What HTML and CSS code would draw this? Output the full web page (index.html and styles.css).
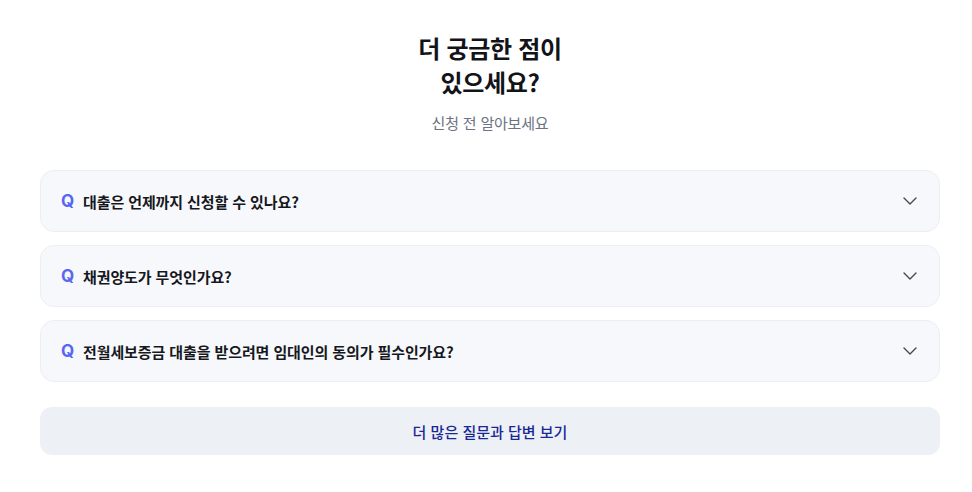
FILE: index.html
```html
<!DOCTYPE html>
<html lang="ko">
<head>
<meta charset="utf-8">
<link rel="stylesheet" href="styles.css">
</head>
<body>
<section class="faq">
  <h2 class="title">더 궁금한 점이<br>있으세요?</h2>
  <p class="subtitle">신청 전 알아보세요</p>
  <ul class="list">
    <li class="item">
      <span class="q">Q</span>
      <span class="text">대출은 언제까지 신청할 수 있나요?</span>
      <svg class="chev" width="14" height="14" viewBox="0 0 14 14"><path d="M1 4 L7 10 L13 4" fill="none" stroke="#454852" stroke-width="1.4" stroke-linecap="round" stroke-linejoin="round"/></svg>
    </li>
    <li class="item">
      <span class="q">Q</span>
      <span class="text">채권양도가 무엇인가요?</span>
      <svg class="chev" width="14" height="14" viewBox="0 0 14 14"><path d="M1 4 L7 10 L13 4" fill="none" stroke="#454852" stroke-width="1.4" stroke-linecap="round" stroke-linejoin="round"/></svg>
    </li>
    <li class="item">
      <span class="q">Q</span>
      <span class="text">전월세보증금 대출을 받으려면 임대인의 동의가 필수인가요?</span>
      <svg class="chev" width="14" height="14" viewBox="0 0 14 14"><path d="M1 4 L7 10 L13 4" fill="none" stroke="#454852" stroke-width="1.4" stroke-linecap="round" stroke-linejoin="round"/></svg>
    </li>
  </ul>
  <button class="more">더 많은 질문과 답변 보기</button>
</section>
</body>
</html>
```

FILE: styles.css
```css
html, body {
  margin: 0;
  padding: 0;
  background: #ffffff;
}
body {
  font-family: "Noto Sans CJK KR", "Noto Sans", sans-serif;
  color: #111318;
}
.faq {
  padding: 31px 32px 0 40px;
  display: flex;
  flex-direction: column;
  align-items: stretch;
}
.title {
  margin: 0;
  text-align: center;
  font-size: 24px;
  line-height: 34px;
  font-weight: 700;
  color: #121419;
  letter-spacing: -0.3px;
}
.subtitle {
  margin: 14px 0 0;
  text-align: center;
  font-size: 15px;
  line-height: 20px;
  color: #6b7280;
  letter-spacing: -0.2px;
}
.list {
  list-style: none;
  margin: 37px 0 0;
  padding: 0;
  display: flex;
  flex-direction: column;
  gap: 13px;
}
.item {
  height: 60px;
  border: 1px solid #eceef3;
  background: #f7f8fc;
  border-radius: 14px;
  display: flex;
  align-items: center;
  padding: 0 22px 0 20px;
}
.q {
  font-family: "Inter", "Noto Sans", sans-serif;
  font-weight: 700;
  font-size: 17px;
  color: #5867f2;
  width: 22px;
}
.text {
  flex: 1;
  font-size: 15px;
  font-weight: 600;
  color: #16181d;
  letter-spacing: -0.1px;
}
.chev {
  display: block;
}
.more {
  margin-top: 25px;
  height: 48px;
  border: none;
  border-radius: 12px;
  background: #edf0f5;
  font-family: "Noto Sans CJK KR", "Noto Sans", sans-serif;
  font-size: 15px;
  font-weight: 500;
  color: #1a2896;
}
```
